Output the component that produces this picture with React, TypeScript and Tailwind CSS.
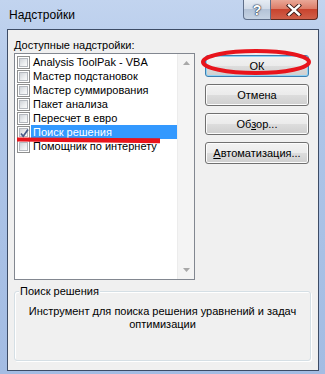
import React from 'react';

const items = [
  { label: 'Analysis ToolPak - VBA', checked: false },
  { label: 'Мастер подстановок', checked: false },
  { label: 'Мастер суммирования', checked: false },
  { label: 'Пакет анализа', checked: false },
  { label: 'Пересчет в евро', checked: false },
  { label: 'Поиск решения', checked: true },
  { label: 'Помощник по интернету', checked: false },
];

const Checkbox = ({ checked }: { checked: boolean }) => (
  <div className="w-[13px] h-[13px] shrink-0 border border-[#8e8f8f] bg-white p-[1px]">
    <div className="relative w-full h-full border border-[#b4b8be] bg-[linear-gradient(135deg,#cfd3d8_0%,#eceef0_60%,#fbfbfb_100%)]">
      {checked && (
        <svg className="absolute -left-[2px] -top-[2px]" width="13" height="13" viewBox="0 0 13 13">
          <path d="M3 6.5 L5.2 9.3 L10 2.5" fill="none" stroke="#4a5d8a" strokeWidth="1.7" />
        </svg>
      )}
    </div>
  </div>
);

const WinButton = ({ children, isDefault }: { children: React.ReactNode; isDefault?: boolean }) => (
  <div
    className={
      isDefault
        ? 'h-[22px] w-[104px] rounded-[3px] border border-[#3c7fb1] shadow-[inset_0_0_0_1px_#8fd3f5] bg-[linear-gradient(#f2f2f2_0%,#ebebeb_50%,#dddddd_50%,#cfcfcf_100%)] flex items-center justify-center text-[11px] text-black'
        : 'h-[22px] w-[104px] rounded-[3px] border border-[#707070] shadow-[inset_0_0_0_1px_#fcfcfc] bg-[linear-gradient(#f2f2f2_0%,#ebebeb_50%,#dddddd_50%,#cfcfcf_100%)] flex items-center justify-center text-[11px] text-black'
    }
  >
    {children}
  </div>
);

export default function App() {
  return (
    <div className="relative w-[325px] h-[374px] overflow-hidden font-['Liberation_Sans',Arial,sans-serif] bg-[linear-gradient(180deg,#c2d4ef_0%,#aec5e8_30%,#a3bce3_100%)]">
      {/* title bar */}
      <div className="flex h-[29px] justify-between pr-[7px]">
        <div className="pl-[9px] pt-[7px] text-[12px] leading-[16px] text-black">Надстройки</div>
        <div className="flex h-[20px]">
          <div className="w-[28px] h-[20px] rounded-bl-[4px] border border-t-0 border-[#5f6f8a] bg-[linear-gradient(#e6ecf4_0%,#d2dbe8_45%,#b4c3d7_50%,#c6d3e4_100%)] flex items-center justify-center">
            <span className="text-[14px] font-bold leading-none text-white [text-shadow:0_0_1px_#27334a,0_0_1px_#27334a,0_0_2px_#27334a]">?</span>
          </div>
          <div className="w-[47px] h-[20px] rounded-br-[4px] border border-l-0 border-t-0 border-[#5c2a22] bg-[linear-gradient(#e9a897_0%,#dd7d68_45%,#c8442e_50%,#d0604a_100%)] flex items-center justify-center">
            <svg width="16" height="12" viewBox="0 0 16 12">
              <path d="M3 1.5 L13 10.5 M13 1.5 L3 10.5" stroke="#3a1a16" strokeWidth="4.2" strokeLinecap="square" />
              <path d="M3 1.5 L13 10.5 M13 1.5 L3 10.5" stroke="#ffffff" strokeWidth="2.4" strokeLinecap="square" />
            </svg>
          </div>
        </div>
      </div>

      {/* client area */}
      <div className="ml-[7px] w-[312px] h-[342px] border border-[#3d4c66] bg-[#f0f0f0] pl-[6px] pt-[8px]">
        <div className="flex">
          <div className="w-[181px] shrink-0">
            <div className="h-[14px] text-[11px] leading-[14px] text-black">
              <span className="underline">Д</span>оступные надстройки:
            </div>
            <div className="mt-[1px] h-[227px] border border-[#828790] bg-white flex">
              <div className="flex-1 pt-[1px] pl-[2px]">
                {items.map((it) => (
                  <div key={it.label} className="flex items-center h-[14px]">
                    <Checkbox checked={it.checked} />
                    <div
                      className={
                        it.checked
                          ? 'ml-[1px] flex-1 h-[14px] pl-[2px] bg-[#3399ff] text-white text-[11px] leading-[14px] whitespace-nowrap'
                          : 'ml-[1px] flex-1 h-[14px] pl-[2px] text-black text-[11px] leading-[14px] whitespace-nowrap'
                      }
                    >
                      {it.label}
                    </div>
                  </div>
                ))}
              </div>
              <div className="w-[17px] bg-[#f4f4f4] border-l border-[#ececec] flex flex-col justify-between items-center py-[7px]">
                <svg width="7" height="4" viewBox="0 0 7 4">
                  <path d="M0 4 L3.5 0 L7 4 Z" fill="#a8a8a8" />
                </svg>
                <svg width="7" height="4" viewBox="0 0 7 4">
                  <path d="M0 0 L3.5 4 L7 0 Z" fill="#a8a8a8" />
                </svg>
              </div>
            </div>
          </div>
          <div className="ml-[10px] mt-[17px] flex flex-col gap-[7px]">
            <WinButton isDefault>ОК</WinButton>
            <WinButton>Отмена</WinButton>
            <WinButton>
              <span>
                Об<span className="underline">з</span>ор...
              </span>
            </WinButton>
            <WinButton>
              <span>
                <span className="underline">А</span>втоматизация...
              </span>
            </WinButton>
          </div>
        </div>

        {/* group box */}
        <div className="relative mt-[11px] w-[297px] h-[70px] rounded-[3px] border border-[#d5dfe5] shadow-[inset_1px_1px_0_#ffffff,1px_1px_0_#ffffff]">
          <div className="absolute -top-[8px] left-[4px] bg-[#f0f0f0] px-[1px] text-[11px] leading-[14px] text-black">
            Поиск решения
          </div>
          <div className="pt-[13px] px-[6px] text-center text-[11px] leading-[13px] text-black">
            Инструмент для поиска решения уравнений и задач оптимизации
          </div>
        </div>
      </div>

      {/* red annotations */}
      <svg className="absolute inset-0 pointer-events-none" width="325" height="374" viewBox="0 0 325 374">
        <ellipse cx="256" cy="62" rx="53" ry="11" fill="none" stroke="#e8141c" strokeWidth="4" />
        <path d="M17 137.5 L160 138.3 L160 143.2 L17 141.5 Z" fill="#e8141c" />
      </svg>
    </div>
  );
}
